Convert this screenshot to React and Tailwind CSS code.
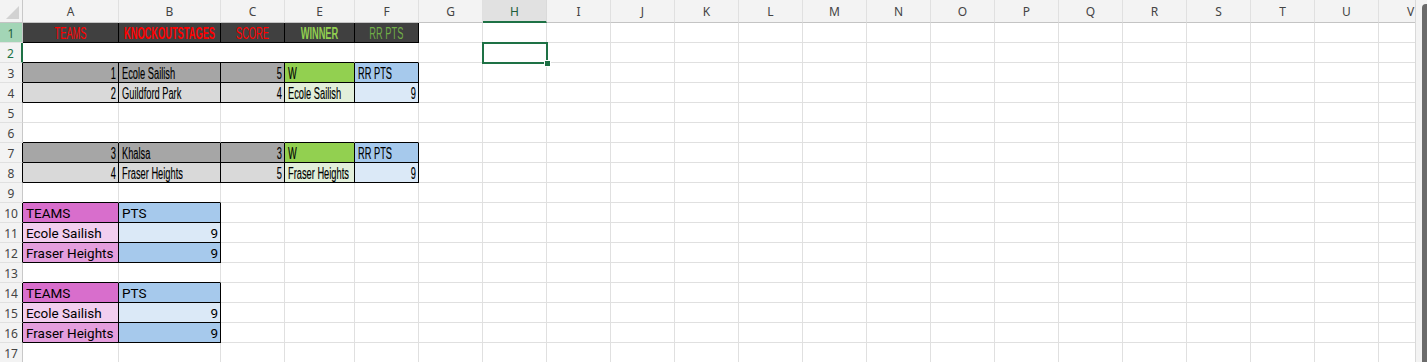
import React from 'react';

const COLS = [
  { k: 'A', w: 96 },
  { k: 'B', w: 102 },
  { k: 'C', w: 64 },
  { k: 'E', w: 70 },
  { k: 'F', w: 64 },
  ...'GHIJKLMNOPQRSTUV'.split('').map(k => ({ k, w: 64 })),
];

const ROWS = Array.from({ length: 17 }, (_, i) => i + 1);

// bordered ranges (col index into COLS)
const BOXES = [
  { r1: 1, r2: 1, c1: 0, c2: 4 },
  { r1: 3, r2: 4, c1: 0, c2: 4 },
  { r1: 7, r2: 8, c1: 0, c2: 4 },
  { r1: 10, r2: 12, c1: 0, c2: 1 },
  { r1: 14, r2: 16, c1: 0, c2: 1 },
];

const boxed = (r, c) => BOXES.some(b => r >= b.r1 && r <= b.r2 && c >= b.c1 && c <= b.c2);

const GRAY = 'bg-[#a6a6a6]';
const LGRAY = 'bg-[#d9d9d9]';
const GREEN = 'bg-[#92d050]';
const LGREEN = 'bg-[#e2efda]';
const BLUE = 'bg-[#a6c9ec]';
const LBLUE = 'bg-[#dbe9f7]';
const PINK = 'bg-[#d86ecc]';
const LPINK = 'bg-[#f2ceef]';
const MPINK = 'bg-[#e49edd]';

const knockout = (r, [a, b, c, e, f]) => ({
  [`A${r}`]: { t: a, bg: GRAY, al: 'r', f: 'cond' },
  [`B${r}`]: { t: b, bg: GRAY, al: 'l', f: 'cond' },
  [`C${r}`]: { t: c, bg: GRAY, al: 'r', f: 'cond' },
  [`E${r}`]: { t: e, bg: GREEN, al: 'l', f: 'cond' },
  [`F${r}`]: { t: f, bg: BLUE, al: 'l', f: 'cond' },
});

const knockout2 = (r, [a, b, c, e, f]) => ({
  [`A${r}`]: { t: a, bg: LGRAY, al: 'r', f: 'cond' },
  [`B${r}`]: { t: b, bg: LGRAY, al: 'l', f: 'cond' },
  [`C${r}`]: { t: c, bg: LGRAY, al: 'r', f: 'cond' },
  [`E${r}`]: { t: e, bg: LGREEN, al: 'l', f: 'cond' },
  [`F${r}`]: { t: f, bg: LBLUE, al: 'r', f: 'cond' },
});

const standings = r => ({
  [`A${r}`]: { t: 'TEAMS', bg: PINK, al: 'l', f: 'body' },
  [`B${r}`]: { t: 'PTS', bg: BLUE, al: 'l', f: 'body' },
  [`A${r + 1}`]: { t: 'Ecole Sailish', bg: LPINK, al: 'l', f: 'body' },
  [`B${r + 1}`]: { t: '9', bg: LBLUE, al: 'r', f: 'body' },
  [`A${r + 2}`]: { t: 'Fraser Heights', bg: MPINK, al: 'l', f: 'body' },
  [`B${r + 2}`]: { t: '9', bg: BLUE, al: 'r', f: 'body' },
});

const DATA = {
  A1: { t: 'TEAMS', bg: 'bg-[#404040]', color: 'text-[#ff0000]', al: 'c', f: 'cond', thin: true },
  B1: { t: 'KNOCKOUTSTAGES', bg: 'bg-[#404040]', color: 'text-[#ff0000]', al: 'c', f: 'cond', bold: true },
  C1: { t: 'SCORE', bg: 'bg-[#404040]', color: 'text-[#ff0000]', al: 'c', f: 'cond', thin: true },
  E1: { t: 'WINNER', bg: 'bg-[#404040]', color: 'text-[#92d050]', al: 'c', f: 'cond', bold: true },
  F1: { t: 'RR PTS', bg: 'bg-[#404040]', color: 'text-[#70ad47]', al: 'c', f: 'cond', thin: true },
  ...knockout(3, ['1', 'Ecole Sailish', '5', 'W', 'RR PTS']),
  ...knockout2(4, ['2', 'Guildford Park', '4', 'Ecole Sailish', '9']),
  ...knockout(7, ['3', 'Khalsa', '3', 'W', 'RR PTS']),
  ...knockout2(8, ['4', 'Fraser Heights', '5', 'Fraser Heights', '9']),
  ...standings(10),
  ...standings(14),
};

function CellText({ d }) {
  if (!d) return null;
  const color = d.color || 'text-black';
  if (d.f === 'cond') {
    const origin = d.al === 'r' ? 'origin-right' : d.al === 'c' ? 'origin-center' : 'origin-left';
    const weight = d.bold ? 'font-bold' : d.thin ? '' : '[-webkit-text-stroke:0.15px_currentColor]';
    return (
      <span
        className={`block shrink-0 scale-x-[0.58] ${origin} font-['Liberation_Sans',sans-serif] text-[16px] leading-[19px] pt-[1px] ${color} ${weight}`}
      >
        {d.t}
      </span>
    );
  }
  return (
    <span className={`block shrink-0 font-['Roboto',sans-serif] text-[13.5px] leading-[19px] pt-[1px] ${color}`}>
      {d.t}
    </span>
  );
}

function Cell({ r, ci }) {
  const col = COLS[ci];
  const id = `${col.k}${r}`;
  const d = DATA[id];
  const rightBlack = boxed(r, ci) || boxed(r, ci + 1);
  const bottomBlack = boxed(r, ci) || boxed(r + 1, ci);
  const just = !d ? '' : d.al === 'r' ? 'justify-end pr-[2px]' : d.al === 'c' ? 'justify-center' : 'justify-start pl-[3px]';
  const selected = id === 'H2';
  return (
    <div
      className={`flex h-[20px] whitespace-nowrap border-r border-b ${rightBlack ? 'border-r-black' : 'border-r-[#e0e0e0]'} ${bottomBlack ? 'border-b-black' : 'border-b-[#e0e0e0]'} ${d ? d.bg : 'bg-white'} ${just} ${selected ? 'relative' : 'overflow-hidden'}`}
    >
      <CellText d={d} />
      {selected && (
        <>
          <div className="absolute -left-[1px] -top-[1px] z-10 h-[22px] w-[66px] border-2 border-[#1e7145]" />
          <div className="absolute left-[62px] top-[18px] z-20 h-[5px] w-[5px] bg-[#1e7145] outline outline-1 outline-white" />
        </>
      )}
    </div>
  );
}

function RowHeader({ r }) {
  const base = 'flex h-[20px] items-start justify-center border-b border-b-[#e0e0e0] pt-[1px] font-["Noto_Sans",sans-serif] text-[12px] leading-[19px]';
  if (r === 1) return <div className={`${base} border-r border-r-[#c8c8c8] bg-[#a3d5b6] text-[#1d5e3a]`}>{r}</div>;
  if (r === 2) return <div className={`${base} border-r-2 border-r-[#1e7145] bg-[#f3f3f3] text-[#1e7145]`}>{r}</div>;
  return (
    <div className={`${base} border-r ${boxed(r, 0) ? 'border-r-black' : 'border-r-[#c8c8c8]'} bg-[#f3f3f3] text-[#444]`}>{r}</div>
  );
}

export default function App() {
  return (
    <div className="flex h-[362px] w-[1428px] overflow-hidden bg-white">
      <div className="w-[1416px] shrink-0 overflow-hidden border-r border-r-[#d9d9d9]">
        <div className="grid w-max grid-cols-[23px_96px_102px_64px_70px_64px_repeat(16,64px)]">
          {/* corner */}
          <div className="flex h-[23px] items-end justify-end border-r border-b border-r-[#c8c8c8] border-b-[#c4c4c4] bg-[#f3f3f3] pb-[2px] pr-[2px]">
            <svg width="14" height="14" viewBox="0 0 14 14">
              <polygon points="13,0 13,13 0,13" fill="#d2d2d2" />
            </svg>
          </div>
          {COLS.map(c =>
            c.k === 'H' ? (
              <div
                key={c.k}
                className="flex h-[23px] justify-center border-r border-b-2 border-r-[#dadada] border-b-[#1e7145] bg-[#e1e1e1] pt-[3px] font-['Noto_Sans',sans-serif] text-[12px] leading-[17px] text-[#1d5e3a]"
              >
                {c.k}
              </div>
            ) : (
              <div
                key={c.k}
                className="flex h-[23px] justify-center border-r border-b border-r-[#e0e0e0] border-b-[#c4c4c4] bg-[#f3f3f3] pt-[3px] font-['Noto_Sans',sans-serif] text-[12px] leading-[17px] text-[#444]"
              >
                {c.k}
              </div>
            )
          )}
          {ROWS.map(r => (
            <React.Fragment key={r}>
              <RowHeader r={r} />
              {r === 2 ? (
                <>
                  <div className="col-span-4 h-[20px] border-r border-b border-r-[#e0e0e0] border-b-black bg-white" />
                  {COLS.slice(4).map((c, i) => (
                    <Cell key={c.k} r={r} ci={i + 4} />
                  ))}
                </>
              ) : (
                COLS.map((c, ci) => <Cell key={c.k} r={r} ci={ci} />)
              )}
            </React.Fragment>
          ))}
        </div>
      </div>
      <div className="flex w-[11px] shrink-0 justify-end bg-[#f3f3f3] pt-[4px]">
        <div className="h-full w-[5px] rounded-tl-[4px] bg-[#6b6b6b]" />
      </div>
    </div>
  );
}
